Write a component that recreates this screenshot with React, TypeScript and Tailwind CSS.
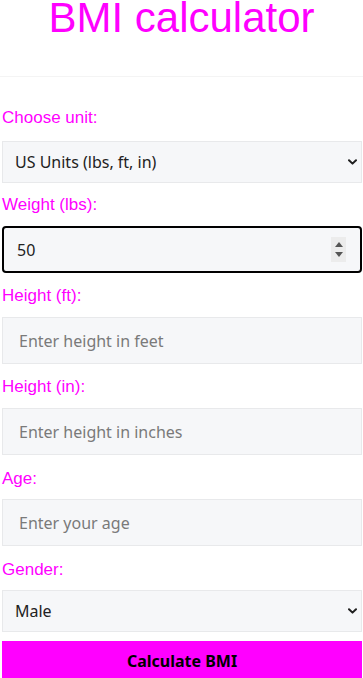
import React from "react";

const Chevron = () => (
  <svg width="9" height="6" viewBox="0 0 9 6" className="absolute right-[5px] top-1/2 -translate-y-1/2 pointer-events-none">
    <path d="M1 1.2 L4.5 4.6 L8 1.2" fill="none" stroke="#1f1f1f" strokeWidth="2" strokeLinecap="round" strokeLinejoin="round" />
  </svg>
);

const labelCls = "block text-[17px] leading-[18px] text-[#f0f] font-['Liberation_Sans',Arial,sans-serif]";
const fieldFont = "font-['Noto_Sans',sans-serif]";

function PlaceholderInput({ ph }: { ph: string }) {
  return (
    <input
      type="text"
      placeholder={ph}
      className={`block w-[360px] h-[47px] bg-[#f6f7f9] border border-[#e8e9eb] pl-[16px] text-[16px] text-[#222] placeholder:text-[#7a7a7a] outline-none ${fieldFont}`}
    />
  );
}

function SelectBox({ options }: { options: string[] }) {
  return (
    <div className="relative w-[360px] h-[42px]">
      <select
        className={`appearance-none block w-full h-full bg-[#f6f7f9] border border-[#e8e9eb] pl-[12px] text-[16px] text-[#222] outline-none ${fieldFont}`}
        defaultValue={options[0]}
      >
        {options.map((o) => (
          <option key={o}>{o}</option>
        ))}
      </select>
      <Chevron />
    </div>
  );
}

export default function App() {
  return (
    <div className="w-[363px] bg-white">
      <div className="h-[77px] border-b border-[#f4f4f4]">
        <h1 className="text-center text-[42px] leading-[36px] text-[#f0f] font-normal font-['Liberation_Sans',Arial,sans-serif]">
          BMI calculator
        </h1>
      </div>
      <div className="pl-[2px] pt-[32px]">
        <label className={labelCls}>Choose unit:</label>
        <div className="mt-[14px]">
          <SelectBox options={["US Units (lbs, ft, in)", "Metric Units (kg, cm)"]} />
        </div>

        <label className={`${labelCls} mt-[13px]`}>Weight (lbs):</label>
        <div className="mt-[12px] w-[360px] h-[47px] border-2 border-black rounded-[4px] bg-[#f6f7f9] flex items-center pl-[13px] pr-[14px]">
          <span className={`text-[16px] text-[#222] ${fieldFont}`}>50</span>
          <div className="ml-auto w-[15px] h-[25px] bg-[#ececec] flex flex-col items-center justify-center gap-[5px]">
            <svg width="8" height="5" viewBox="0 0 8 5"><path d="M0 5 L4 0 L8 5 Z" fill="#555" /></svg>
            <svg width="8" height="5" viewBox="0 0 8 5"><path d="M0 0 L4 5 L8 0 Z" fill="#555" /></svg>
          </div>
        </div>

        <label className={`${labelCls} mt-[14px]`}>Height (ft):</label>
        <div className="mt-[12px]">
          <PlaceholderInput ph="Enter height in feet" />
        </div>

        <label className={`${labelCls} mt-[14px]`}>Height (in):</label>
        <div className="mt-[12px]">
          <PlaceholderInput ph="Enter height in inches" />
        </div>

        <label className={`${labelCls} mt-[15px]`}>Age:</label>
        <div className="mt-[11px]">
          <PlaceholderInput ph="Enter your age" />
        </div>

        <label className={`${labelCls} mt-[15px]`}>Gender:</label>
        <div className="mt-[11px]">
          <SelectBox options={["Male", "Female"]} />
        </div>

        <button
          className={`mt-[9px] block w-[360px] h-[37px] bg-[#f0f] text-black font-bold text-[16px] pt-[3px] ${fieldFont}`}
        >
          Calculate BMI
        </button>
      </div>
      <div className="h-px bg-[#c8c8c8]" />
    </div>
  );
}
